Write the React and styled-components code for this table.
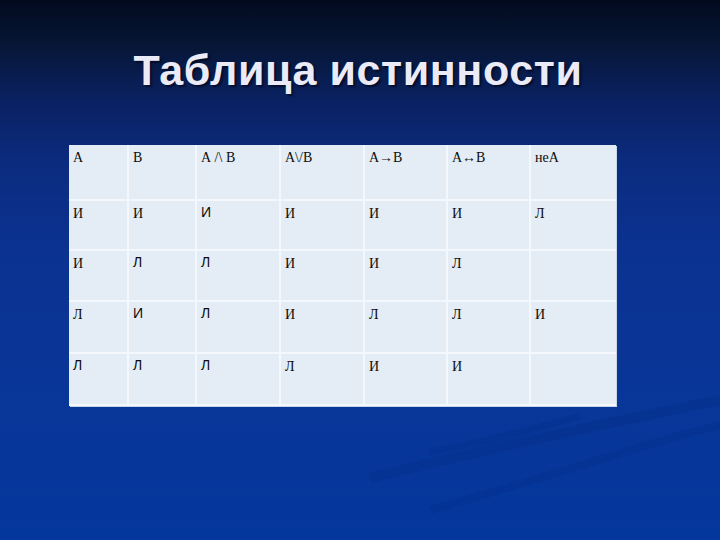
import React from "react";
import styled, { createGlobalStyle } from "styled-components";

const GlobalStyle = createGlobalStyle`
  html, body {
    margin: 0;
    padding: 0;
    background: #03317f;
  }
`;

const headers = ["А", "В", "А /\\ В", "А\\/В", "А→В", "А↔В", "неА"];

// s = sans glyph (the slide mixes fonts)
const rows = [
  [["И"], ["И"], ["И", "s"], ["И"], ["И"], ["И"], ["Л"]],
  [["И"], ["Л", "s"], ["Л", "s"], ["И"], ["И"], ["Л"], [""]],
  [["Л"], ["И", "s"], ["Л", "s"], ["И"], ["Л"], ["Л"], ["И"]],
  [["Л", "s"], ["Л", "s"], ["Л", "s"], ["Л"], ["И"], ["И"], [""]],
];

const widths = [60, 68, 84, 84, 83, 83, 85];
const heights = [50, 51, 52, 52];

const Slide = () => (
  <Wrapper>
    <Swoosh viewBox="0 0 720 540" preserveAspectRatio="none">
      <path d="M370 478 C 480 450, 600 425, 720 400" stroke="#022a80" strokeWidth="10" fill="none" opacity="0.28" />
      <path d="M430 510 C 540 480, 640 445, 720 425" stroke="#022a80" strokeWidth="8" fill="none" opacity="0.24" />
      <path d="M430 452 C 490 440, 540 428, 580 416" stroke="#022a80" strokeWidth="7" fill="none" opacity="0.24" />
    </Swoosh>
    <Title>Таблица истинности</Title>
    <Table>
      <Row>
        {headers.map((h, i) => (
          <Cell key={i} $w={widths[i]} $h={56}>
            {h}
          </Cell>
        ))}
      </Row>
      {rows.map((r, ri) => (
        <Row key={ri}>
          {r.map(([v, f], ci) => (
            <Cell key={ci} $w={widths[ci]} $h={heights[ri]} $sans={f === "s"}>
              {v}
            </Cell>
          ))}
        </Row>
      ))}
    </Table>
  </Wrapper>
);

const Wrapper = styled.div`
  position: relative;
  width: 720px;
  height: 540px;
  overflow: hidden;
  box-sizing: border-box;
  padding-top: 44px;
  display: flex;
  flex-direction: column;
  align-items: flex-start;
  background: linear-gradient(
    180deg,
    #020a1e 0%,
    #061634 8%,
    #0a2160 18%,
    #0b2b7e 30%,
    #0b3290 45%,
    #0a3597 65%,
    #04379c 100%
  );
`;

const Swoosh = styled.svg`
  position: absolute;
  left: 0;
  top: 0;
  width: 720px;
  height: 540px;
  pointer-events: none;
`;

const Title = styled.h1`
  position: relative;
  margin: 0;
  width: 720px;
  text-align: center;
  font-family: "Liberation Sans", Arial, sans-serif;
  font-weight: bold;
  font-size: 43px;
  letter-spacing: 0.6px;
  line-height: 52px;
  color: #ebebf8;
  text-shadow: 2px 2px 2px rgba(0, 0, 20, 0.6);
  transform: translateX(-2px);
`;

const Table = styled.div`
  position: relative;
  margin-top: 49px;
  margin-left: 69px;
  display: flex;
  flex-direction: column;
  background: #f6f9fd;
  box-shadow: 1px 1px 0 #c9d6ea;
`;

const Row = styled.div`
  display: flex;
`;

const Cell = styled.div`
  box-sizing: border-box;
  width: ${(p) => p.$w}px;
  height: ${(p) => p.$h}px;
  padding: ${(p) => (p.$sans ? "3px 0 0 4px" : "5px 0 0 4px")};
  background: #e4ecf5;
  border-right: 2px solid #f4f7fb;
  border-bottom: 2px solid #f4f7fb;
  font-family: ${(p) =>
    p.$sans ? `"Liberation Sans", Arial, sans-serif` : `"Liberation Serif", "Times New Roman", serif`};
  font-size: 14px;
  line-height: 16px;
  color: #0d0d0d;
  white-space: nowrap;
  &:last-child {
    border-right: none;
  }
`;

export default function App() {
  return (
    <>
      <GlobalStyle />
      <Slide />
    </>
  );
}
